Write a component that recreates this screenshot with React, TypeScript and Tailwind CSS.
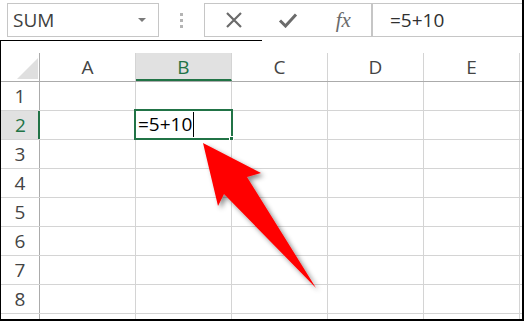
import React from "react";

const cols = ["A", "B", "C", "D", "E"];
const rows = [1, 2, 3, 4, 5, 6, 7, 8, 9];

function XIcon() {
  return (
    <svg width="18" height="18" viewBox="0 0 18 18">
      <path d="M2 2 L16 16 M16 2 L2 16" stroke="#6b6b6b" strokeWidth="2.2" fill="none" />
    </svg>
  );
}

function CheckIcon() {
  return (
    <svg width="20" height="16" viewBox="0 0 20 16">
      <path d="M2 8.5 L7.5 14 L18 2.5" stroke="#6b6b6b" strokeWidth="3" fill="none" strokeLinejoin="miter" />
    </svg>
  );
}

export default function App() {
  return (
    <div className="relative flex h-[321px] w-[524px] flex-col overflow-hidden border-r-2 border-black bg-white font-['Open_Sans',sans-serif]">
      {/* formula bar */}
      <div className="flex h-[40px] shrink-0 items-start pt-[3px]">
        <div className="ml-[7px] flex h-[34px] w-[152px] items-center justify-between border border-[#c6c6c6] pl-[5px] pr-[12px]">
          <span className="text-[19px] leading-none text-[#404040]">SUM</span>
          <span className="h-0 w-0 border-x-[4px] border-t-[4px] border-x-transparent border-t-[#7a7a7a]" />
        </div>
        <div className="flex w-[45px] flex-col items-center gap-[3px] pt-[10px]">
          <span className="h-[3px] w-[3px] bg-[#b4b4b4]" />
          <span className="h-[3px] w-[3px] bg-[#b4b4b4]" />
          <span className="h-[3px] w-[3px] bg-[#b4b4b4]" />
        </div>
        <div className="flex h-[34px] w-[168px] items-center border border-[#c6c6c6]">
          <div className="flex w-[56px] justify-center pl-[2px]"><XIcon /></div>
          <div className="flex w-[56px] justify-center"><CheckIcon /></div>
          <div className="flex w-[56px] justify-center font-['Liberation_Serif',serif] italic text-[21px] leading-none text-[#6b6b6b]">
            fx
          </div>
        </div>
        <div className="flex h-[34px] flex-1 items-center border-y border-l border-[#c6c6c6] pl-[17px]">
          <span className="text-[19px] leading-none text-[#303030]">=5+10</span>
        </div>
      </div>
      <div className="h-[1px] w-[262px] shrink-0 bg-black" />

      {/* grid */}
      <div className="flex-1 overflow-hidden border-b-2 border-l border-black pt-[12px]">
        {/* header row */}
        <div className="flex h-[29px] border-b border-[#ababab]">
          <div className="relative w-[39px] border-r border-[#ababab]">
            <svg className="absolute left-[16px] top-[5px]" width="21" height="21" viewBox="0 0 21 21">
              <path d="M21 0 L21 21 L0 21 Z" fill="#dfdfdf" />
            </svg>
          </div>
          {cols.map((c) => (
            <div
              key={c}
              className={
                c === "B"
                  ? "flex w-[96px] items-center justify-center border-r border-[#d4d4d4] border-b-2 border-b-[#217346] bg-[#e1e1e1] pt-[2px] text-[19px] text-[#217346]"
                  : "flex w-[96px] items-center justify-center border-r border-[#d4d4d4] text-[19px] text-[#444444]"
              }
            >
              {c}
            </div>
          ))}
          <div className="flex-1" />
        </div>
        {rows.map((r) => (
          <div key={r} className="flex h-[29px] border-b border-[#d4d4d4]">
            <div
              className={
                r === 2
                  ? "flex w-[39px] items-center justify-center border-r-2 border-[#217346] bg-[#e1e1e1] pl-[2px] text-[19px] text-[#217346]"
                  : "flex w-[39px] items-center justify-center border-r border-[#ababab] text-[19px] text-[#444444]"
              }
            >
              {r < 9 ? r : null}
            </div>
            {cols.map((c) => (
              <div key={c} className="relative w-[96px] border-r border-[#d4d4d4]">
                {r === 2 && c === "B" && (
                  <div className="absolute -left-[2px] -top-[2px] h-[31px] w-[99px] border-2 border-[#217346]">
                    <div className="flex h-full items-center pl-[2px]">
                      <span className="text-[19px] leading-none text-black">=5+10</span>
                      <span className="ml-[1px] h-[25px] w-[1px] bg-black" />
                    </div>
                    <div className="absolute -bottom-[3px] -right-[3px] h-[5px] w-[5px] border border-white bg-[#217346]" />
                  </div>
                )}
              </div>
            ))}
            <div className="flex-1" />
          </div>
        ))}
      </div>

      {/* red arrow */}
      <svg className="pointer-events-none absolute left-0 top-0" width="524" height="321" viewBox="0 0 524 321">
        <defs>
          <filter id="sh" x="-20%" y="-20%" width="140%" height="140%">
            <feDropShadow dx="3" dy="3" stdDeviation="2.5" floodColor="#000" floodOpacity="0.45" />
          </filter>
        </defs>
        <path d="M203 143 L261 173 L247 177 L316 288 L224 194 L218 206 Z" fill="#ff0000" filter="url(#sh)" />
      </svg>
    </div>
  );
}
